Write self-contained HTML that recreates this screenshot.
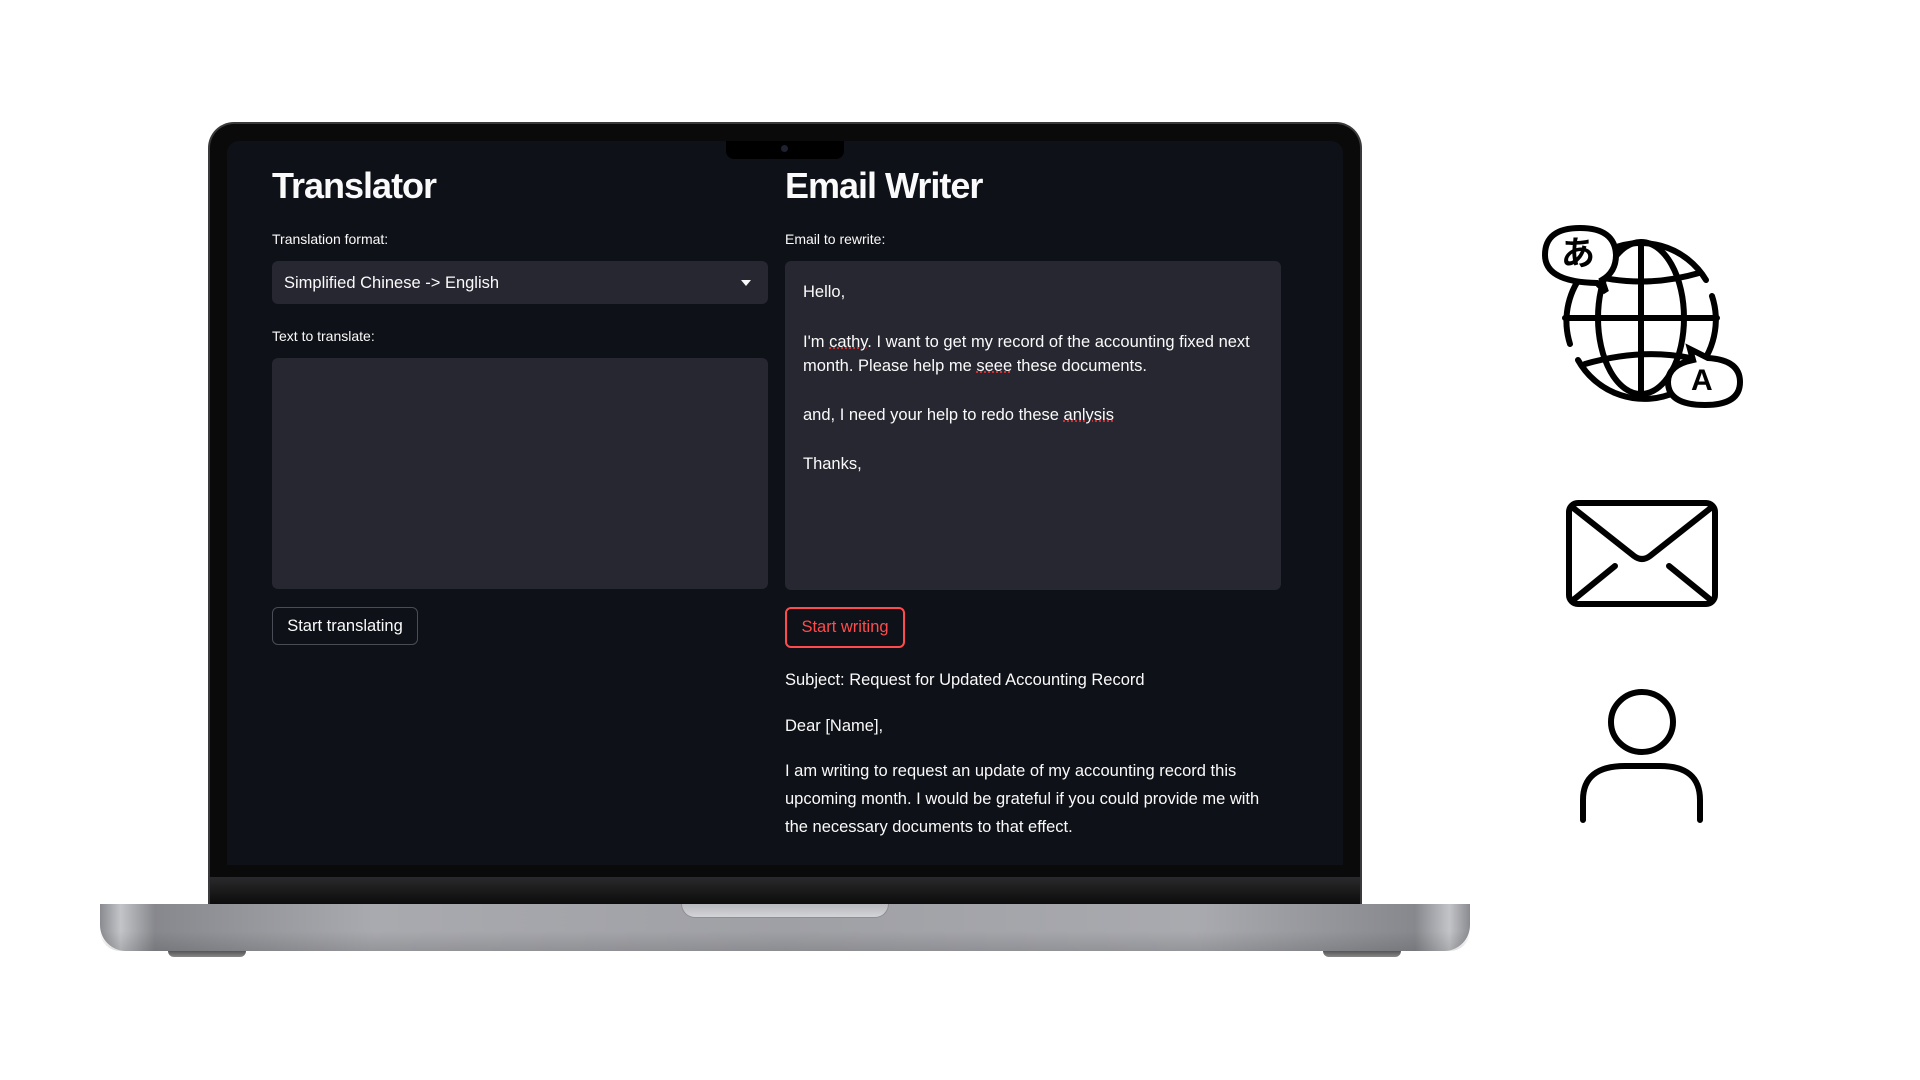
<!DOCTYPE html>
<html><head><meta charset="utf-8"><style>
*{margin:0;padding:0;box-sizing:border-box}
body{width:1920px;height:1080px;background:#fff;position:relative;overflow:hidden;font-family:"Liberation Sans","Noto Sans CJK JP",sans-serif}
.abs{position:absolute}
.lid{left:208px;top:122px;width:1154px;height:784px;background:#0a0a0a;border-radius:26px 26px 0 0;border:2px solid #3a3a3c;border-bottom:none}
.screen{left:227px;top:141px;width:1116px;height:724px;background:#0e1117;border-radius:12px 12px 0 0}
.notch{left:726px;top:141px;width:118px;height:18px;background:#000;border-radius:0 0 8px 8px}
.cam{width:7px;height:7px;border-radius:50%;background:#1e2230}
.bez{left:210px;top:877px;width:1150px;height:27px;background:linear-gradient(#2a2a2c,#0c0c0c)}
.base{left:100px;top:904px;width:1370px;height:47px;border-radius:0 0 26px 26px;background:linear-gradient(90deg,#8a8b90 0%,#c3c4c8 1.5%,#87888d 4%,#a9aaaf 20%,#9fa0a5 50%,#a9aaaf 80%,#87888d 96%,#c3c4c8 98.5%,#8a8b90 100%)}
.base:after{content:"";position:absolute;left:0;right:0;bottom:0;height:20px;background:linear-gradient(rgba(0,0,0,0),rgba(0,0,0,.12));border-radius:0 0 26px 26px}
.thumb{left:681px;top:904px;width:208px;height:14px;background:linear-gradient(#b8b9bd,#d3d4d8);border-radius:0 0 14px 14px;border:1px solid #8e8f93;border-top:none}
.foot{top:951px;width:78px;height:6px;background:linear-gradient(#555,#888);border-radius:0 0 6px 6px}
h1{position:absolute;font-size:36px;font-weight:700;color:#fafafa;letter-spacing:-1px}
.lbl{position:absolute;font-size:14px;color:#fafafa}
.box{position:absolute;background:#262730;border-radius:6px}
.p{position:absolute;font-size:16.5px;color:#fafafa;white-space:nowrap}
.btn{position:absolute;border:1px solid #4a4c56;border-radius:6px;font-size:16.5px;color:#fafafa;display:flex;align-items:center;justify-content:center}
</style></head><body>
<div class="abs lid"></div>
<div class="abs screen"></div>
<div class="abs notch"></div>
<div class="abs cam" style="left:781px;top:145px"></div>
<div class="abs bez"></div>
<div class="abs base"></div>
<div class="abs thumb"></div>
<div class="abs foot" style="left:168px"></div>
<div class="abs foot" style="left:1323px"></div>

<h1 style="left:272px;top:165px">Translator</h1>
<div class="lbl" style="left:272px;top:231px">Translation format:</div>
<div class="box" style="left:272px;top:261px;width:496px;height:43px"></div>
<div class="p" style="left:284px;top:274px">Simplified Chinese -&gt; English</div>
<svg class="abs" style="left:741px;top:280px" width="10" height="6"><path d="M0 0H10L5 6Z" fill="#fafafa"/></svg>
<div class="lbl" style="left:272px;top:328px">Text to translate:</div>
<div class="box" style="left:272px;top:358px;width:496px;height:231px"></div>
<div class="btn" style="left:272px;top:607px;width:146px;height:38px">Start translating</div>

<h1 style="left:785px;top:165px">Email Writer</h1>
<div class="lbl" style="left:785px;top:231px">Email to rewrite:</div>
<div class="box" style="left:785px;top:261px;width:496px;height:329px"></div>
<div class="p" style="left:803px;top:283px">Hello,</div>
<div class="p" style="left:803px;top:333px">I'm <u style="text-decoration-color:#e33;text-decoration-style:dotted">cathy</u>. I want to get my record of the accounting fixed next</div>
<div class="p" style="left:803px;top:357px">month. Please help me <u style="text-decoration-color:#e33;text-decoration-style:dotted">seee</u> these documents.</div>
<div class="p" style="left:803px;top:406px">and, I need your help to redo these <u style="text-decoration-color:#e33;text-decoration-style:dotted">anlysis</u></div>
<div class="p" style="left:803px;top:455px">Thanks,</div>
<div class="btn" style="left:785px;top:607px;width:120px;height:41px;border:2px solid #ff4b4b;color:#ff4b4b">Start writing</div>
<div class="p" style="left:785px;top:671px">Subject: Request for Updated Accounting Record</div>
<div class="p" style="left:785px;top:717px">Dear [Name],</div>
<div class="p" style="left:785px;top:762px">I am writing to request an update of my accounting record this</div>
<div class="p" style="left:785px;top:790px">upcoming month. I would be grateful if you could provide me with</div>
<div class="p" style="left:785px;top:818px">the necessary documents to that effect.</div>

<svg class="abs" style="left:0;top:0" width="1920" height="1080" fill="none" stroke="#000" stroke-width="6" stroke-linecap="round">
 <path d="M1605 252A76 76 0 0 1 1706 280"/>
 <path d="M1712 296A76 76 0 0 1 1695 372"/>
 <path d="M1676 392A76 76 0 0 1 1578 360"/>
 <path d="M1570 344A76 76 0 0 1 1582 275"/>
 <ellipse cx="1641" cy="318" rx="43" ry="76"/>
 <path d="M1641 242V394M1565 318H1717M1583 273Q1641 290 1699 273M1585 364Q1641 348 1690 358"/>
 <path d="M1597 283Q1545 282 1545 255Q1545 228 1580 228Q1615 228 1616 255Q1616 272 1602 280L1606 292Z" fill="#fff"/>
 <path d="M1690 349L1693 360Q1668 365 1668 382Q1668 405 1705 405Q1740 405 1740 382Q1740 360 1708 358Z" fill="#fff"/>
 <rect x="1569" y="503" width="146" height="101" rx="9"/>
 <path d="M1572 507L1634 556Q1642 562 1650 556L1712 507M1572 601L1615 566M1712 601L1669 566"/>
 <ellipse cx="1642" cy="722" rx="31" ry="30"/>
 <path d="M1583 820V800Q1583 766 1625 766H1660Q1700 766 1700 800V820"/>
</svg>
<div class="abs" style="left:1561px;top:234px;font-size:34px;font-weight:700;font-family:'Noto Sans CJK JP',sans-serif;color:#000;line-height:1">あ</div>
<div class="abs" style="left:1691px;top:366px;font-size:30px;font-weight:700;color:#000;line-height:1">A</div>
</body></html>
